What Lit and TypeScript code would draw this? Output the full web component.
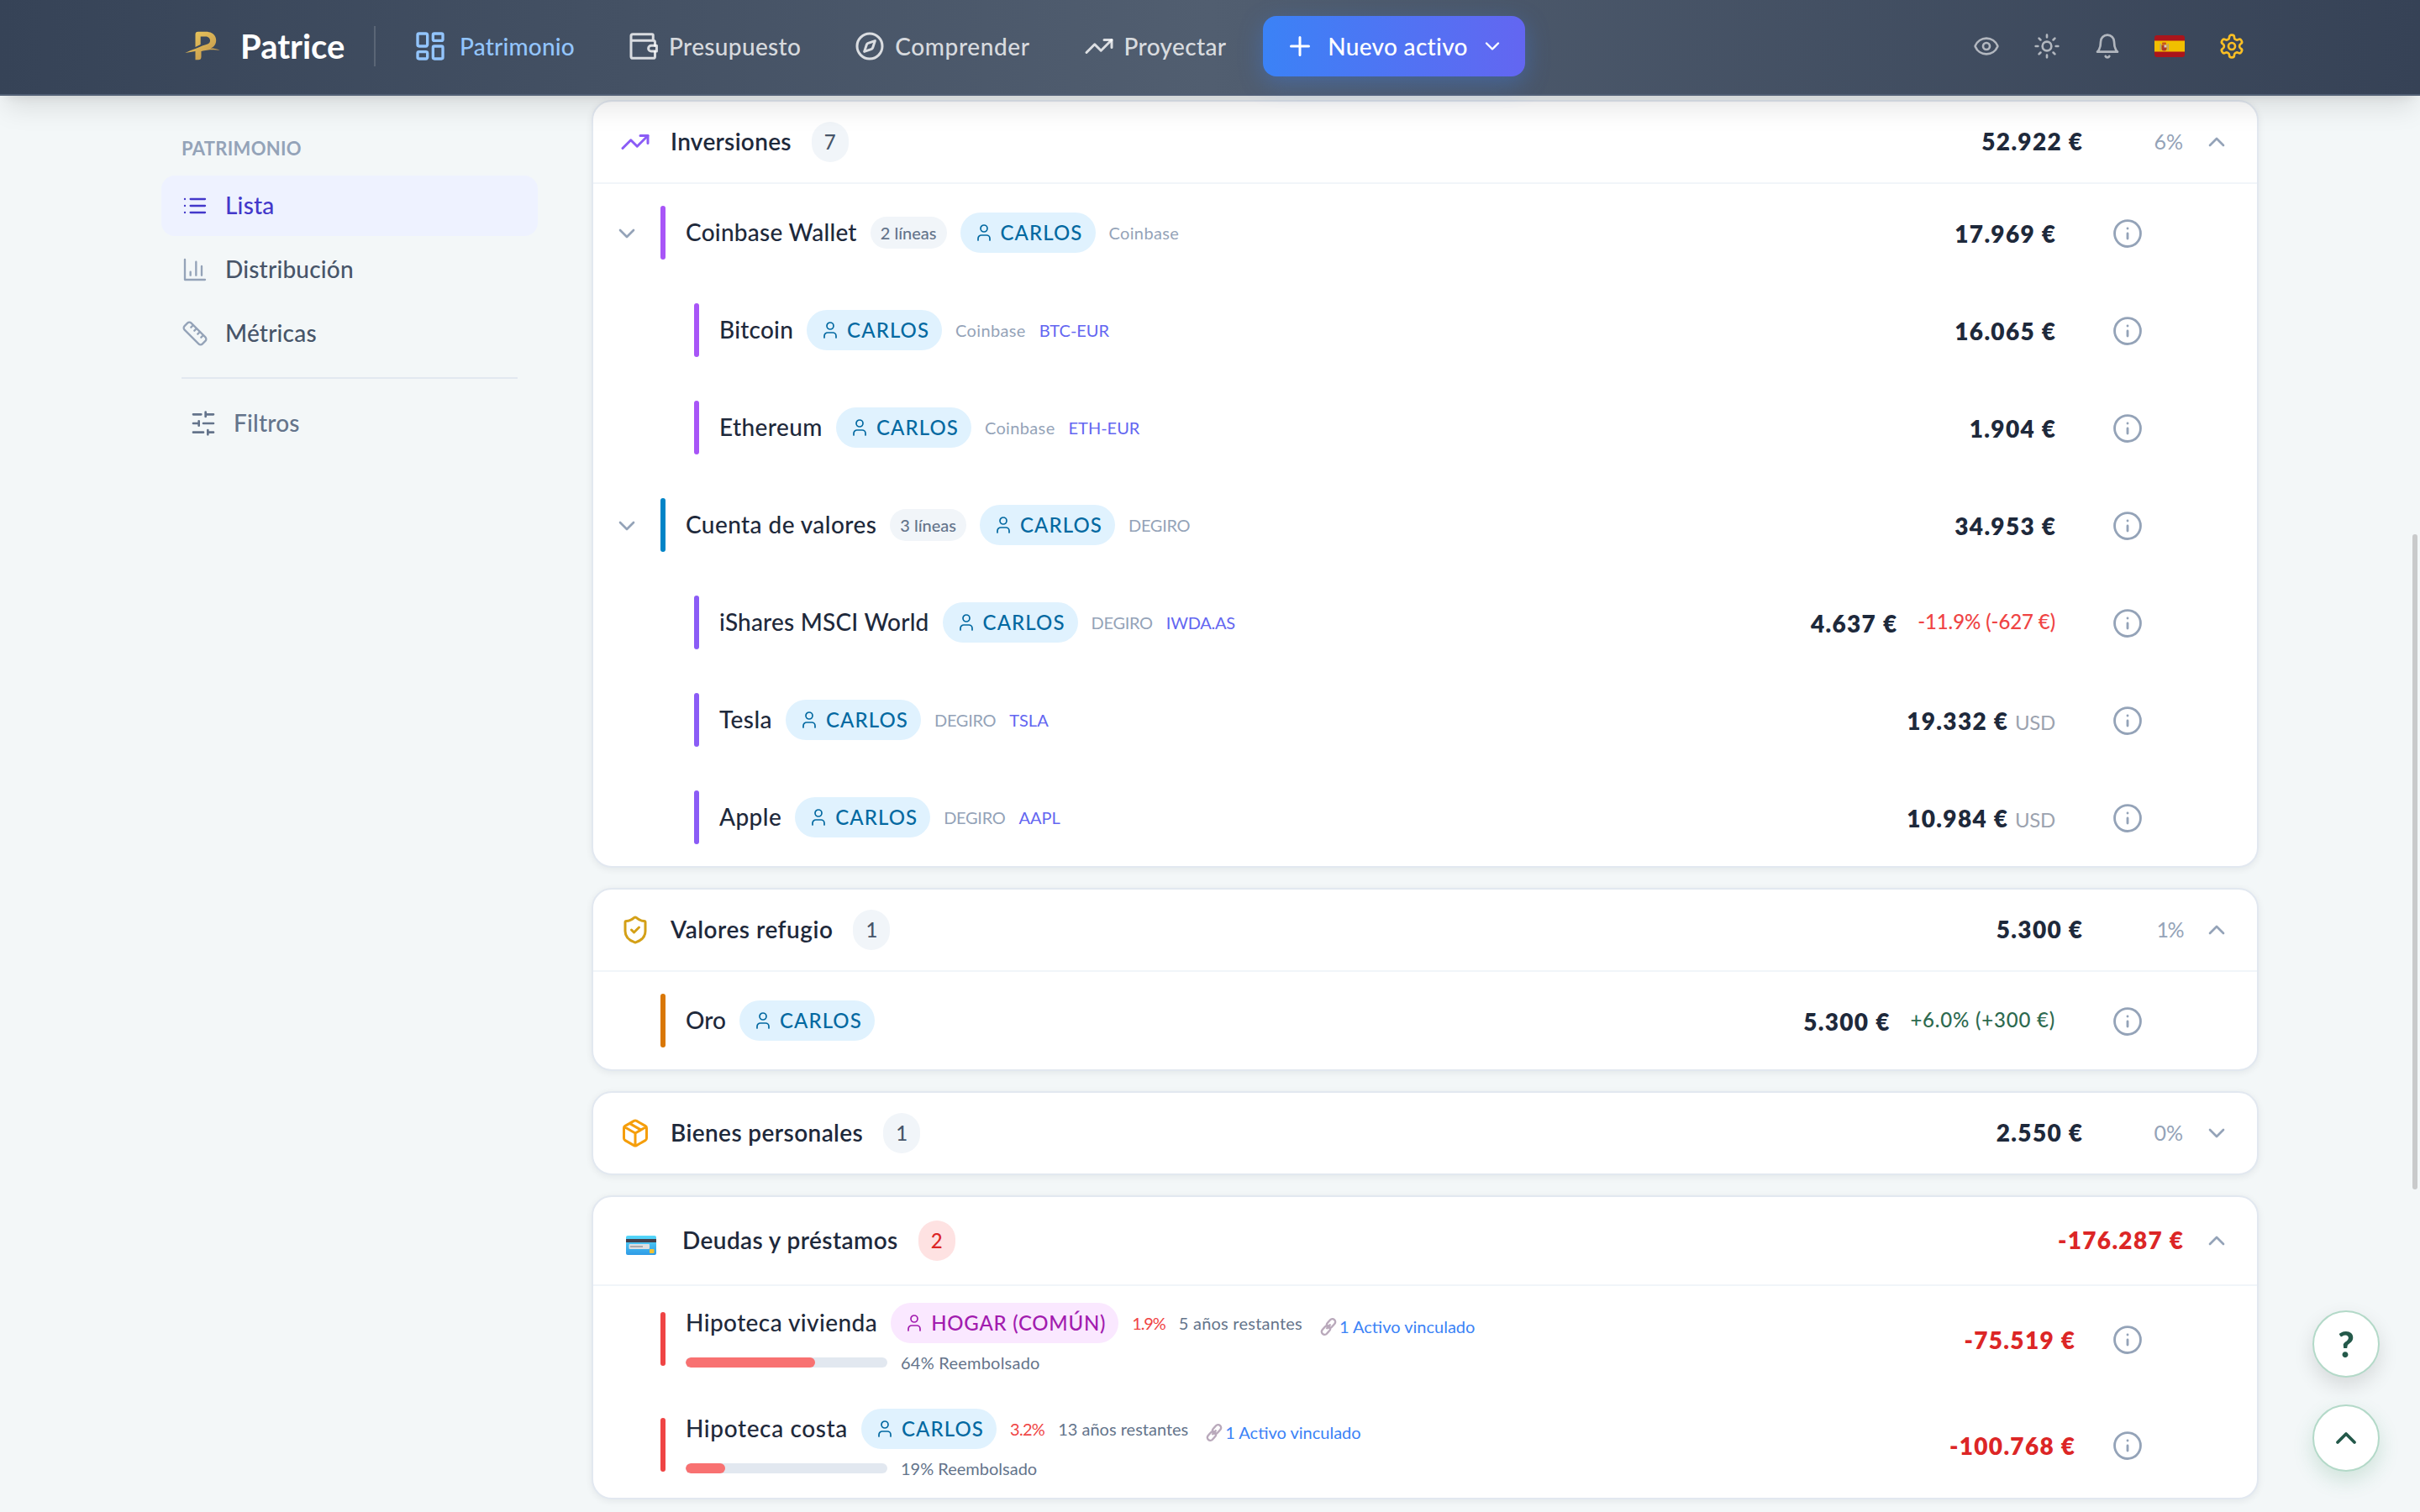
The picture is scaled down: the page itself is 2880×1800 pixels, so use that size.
import { LitElement, css, html, nothing, svg, SVGTemplateResult } from "lit";
import { customElement, property } from "lit/decorators.js";
import { classMap } from "lit/directives/class-map.js";
import { styleMap } from "lit/directives/style-map.js";

const ICONS: Record<string, SVGTemplateResult> = {
  dashboard: svg`<rect x="3" y="3" width="7" height="9" rx="1"/><rect x="14" y="3" width="7" height="5" rx="1"/><rect x="14" y="12" width="7" height="9" rx="1"/><rect x="3" y="16" width="7" height="5" rx="1"/>`,
  wallet: svg`<path d="M19.5 7.5V3.4a.9.9 0 0 0-.9-.9H3.4a1.4 1.4 0 0 0-1.4 1.4v16.2a1.4 1.4 0 0 0 1.4 1.4h16.2a1.4 1.4 0 0 0 1.4-1.4v-4M2 6.2a1.4 1.4 0 0 0 1.4 1.3h16.2A1.4 1.4 0 0 1 21 8.900v2.600"/><path d="M22.300 11.500v4.500h-4.300a2.250 2.250 0 0 1 0-4.500z"/>`,
  compass: svg`<circle cx="12" cy="12" r="10"/><path d="m16.240 7.760-1.800 5.410a2 2 0 0 1-1.270 1.270L7.760 16.240l1.800-5.410a2 2 0 0 1 1.270-1.270z"/>`,
  trending: svg`<path d="m22 7-8.500 8.500-5-5L2 17"/><path d="M16 7h6v6"/>`,
  plus: svg`<path d="M5 12h14M12 5v14"/>`,
  down: svg`<path d="m6 9 6 6 6-6"/>`,
  up: svg`<path d="m18 15-6-6-6 6"/>`,
  eye: svg`<path d="M2.062 12.348a1 1 0 0 1 0-.696 10.750 10.750 0 0 1 19.876 0 1 1 0 0 1 0 .696 10.750 10.750 0 0 1-19.876 0"/><circle cx="12" cy="12" r="3"/>`,
  sun: svg`<circle cx="12" cy="12" r="4"/><path d="M12 2v2M12 20v2M4.930 4.930l1.410 1.410M17.660 17.660l1.410 1.410M2 12h2M20 12h2M6.340 17.660l-1.410 1.410M19.070 4.930l-1.410 1.410"/>`,
  bell: svg`<path d="M6 8a6 6 0 0 1 12 0c0 7 3 9 3 9H3s3-2 3-9"/><path d="M10.300 21a1.940 1.940 0 0 0 3.400 0"/>`,
  gear: svg`<path d="M12.220 2h-.44a2 2 0 0 0-2 2v.18a2 2 0 0 1-1 1.730l-.43.25a2 2 0 0 1-2 0l-.15-.08a2 2 0 0 0-2.730.73l-.22.38a2 2 0 0 0 .73 2.730l.15.1a2 2 0 0 1 1 1.720v.51a2 2 0 0 1-1 1.740l-.15.09a2 2 0 0 0-.73 2.730l.22.38a2 2 0 0 0 2.730.73l.15-.08a2 2 0 0 1 2 0l.43.25a2 2 0 0 1 1 1.730V20a2 2 0 0 0 2 2h.44a2 2 0 0 0 2-2v-.18a2 2 0 0 1 1-1.730l.43-.25a2 2 0 0 1 2 0l.15.08a2 2 0 0 0 2.730-.73l.22-.39a2 2 0 0 0-.73-2.730l-.15-.08a2 2 0 0 1-1-1.740v-.5a2 2 0 0 1 1-1.740l.15-.09a2 2 0 0 0 .73-2.730l-.22-.38a2 2 0 0 0-2.730-.73l-.15.08a2 2 0 0 1-2 0l-.43-.25a2 2 0 0 1-1-1.730V4a2 2 0 0 0-2-2z"/><circle cx="12" cy="12" r="3"/>`,
  list: svg`<path d="M8 6h13M8 12h13M8 18h13M3 6h.01M3 12h.01M3 18h.01"/>`,
  chart: svg`<path d="M3 3v18h18M18 17V9M13 17V5M8 17v-3"/>`,
  ruler: svg`<path d="M21.300 15.300a2.400 2.400 0 0 1 0 3.400l-2.600 2.600a2.400 2.400 0 0 1-3.400 0L2.700 8.700a2.410 2.410 0 0 1 0-3.400l2.600-2.600a2.410 2.410 0 0 1 3.400 0ZM14.500 12.500l2-2M11.500 9.500l2-2M8.500 6.500l2-2M17.500 15.500l2-2"/>`,
  sliders: svg`<path d="M21 4h-7M10 4H3M21 12h-9M8 12H3M21 20h-5M12 20H3M14 2v4M8 10v4M16 18v4"/>`,
  user: svg`<path d="M19 21v-2a4 4 0 0 0-4-4H9a4 4 0 0 0-4 4v2"/><circle cx="12" cy="7" r="4"/>`,
  info: svg`<circle cx="12" cy="12" r="10.300"/><path d="M12 16v-4M12 8h.01"/>`,
  shield: svg`<path d="M20 13c0 5-3.500 7.500-7.660 8.950a1 1 0 0 1-.67-.01C7.500 20.500 4 18 4 13V6a1 1 0 0 1 1-1c2 0 4.500-1.200 6.240-2.720a1.170 1.170 0 0 1 1.520 0C14.510 3.810 17 5 19 5a1 1 0 0 1 1 1z"/><path d="m9 12 2 2 4-4"/>`,
  box: svg`<path d="M11 21.730a2 2 0 0 0 2 0l7-4A2 2 0 0 0 21 16V8a2 2 0 0 0-1-1.730l-7-4a2 2 0 0 0-2 0l-7 4A2 2 0 0 0 3 8v8a2 2 0 0 0 1 1.730zM12 22V12M3.300 7 12 12l8.700-5M7.500 4.270l9 5.150"/>`,
};

// Letter spacing in px, for labels that need other than their class gives
const TRACKING: Record<string, number> = {
  "Patrimonio": 0.2,
  "Comprender": 0.6,
  "Coinbase Wallet": 0.25,
  "Bitcoin": 0.25,
  "iShares MSCI World": 0.2,
  "Oro": 0,
  "Hipoteca costa": 0.63,
  "Inversiones": 0.3,
  "Valores refugio": 0.52,
  "HOGAR (COMÚN)": 0.75,
  "Coinbase": 0.35,
  "DEGIRO": -0.3,
  "IWDA.AS": -0.25,
  "1.9%": -1.1,
  "3.2%": -0.7,
  "13 años restantes": 0,
  "19% Reembolsado": 0,
  "+6.0% (+300 €)": 0.8,
  "-11.9% (-627 €)": -0.1,
  "1%": -1.5,
};

const label = (value: string, classes: string) => html`<span
  class=${classes}
  style=${styleMap(value in TRACKING ? { letterSpacing: `${TRACKING[value]}px` } : {})}
>${value}</span>`;

@customElement("ui-icon")
export class UiIcon extends LitElement {
  static styles = css`
    :host {
      display: inline-flex;
      flex: none;
    }
    .icon {
      display: block;
      fill: none;
      stroke: currentColor;
      stroke-linecap: round;
      stroke-linejoin: round;
      overflow: visible;
    }
  `;

  @property({ type: String })
  name = "";

  @property({ type: Number })
  size = 32;

  @property({ type: Number })
  weight = 2;

  render() {
    return html`<svg class="icon" viewBox="0 0 24 24" width=${this.size} height=${this.size} stroke-width=${this.weight}>
      ${ICONS[this.name] ?? nothing}
    </svg>`;
  }
}

interface Holding {
  name: string;
  color: string;
  amount: string;
  owner: string;
  shared?: boolean;
  lines?: string;
  child?: boolean;
  source?: string;
  ticker?: string;
  gain?: string;
  loss?: string;
  currency?: string;
}

interface Debt extends Holding {
  rate: string;
  remaining: string;
  paid: number;
  paidWidth: number;
}

interface Group {
  title: string;
  icon: string;
  iconColor: string;
  total: string;
  share: string;
  count: number;
  open: boolean;
  holdings: Holding[];
}

const GROUPS: Group[] = [
  {
    title: "Inversiones",
    icon: "trending",
    iconColor: "#8b5cf6",
    total: "52.922 €",
    share: "6%",
    count: 7,
    open: true,
    holdings: [
      { name: "Coinbase Wallet", color: "#a855f7", amount: "17.969 €", owner: "CARLOS", lines: "2 líneas", source: "Coinbase" },
      { name: "Bitcoin", color: "#a855f7", amount: "16.065 €", owner: "CARLOS", child: true, source: "Coinbase", ticker: "BTC-EUR" },
      { name: "Ethereum", color: "#a855f7", amount: "1.904 €", owner: "CARLOS", child: true, source: "Coinbase", ticker: "ETH-EUR" },
      { name: "Cuenta de valores", color: "#0284c7", amount: "34.953 €", owner: "CARLOS", lines: "3 líneas", source: "DEGIRO" },
      { name: "iShares MSCI World", color: "#8b5cf6", amount: "4.637 €", owner: "CARLOS", child: true, source: "DEGIRO", ticker: "IWDA.AS", loss: "-11.9% (-627 €)" },
      { name: "Tesla", color: "#8b5cf6", amount: "19.332 €", owner: "CARLOS", child: true, source: "DEGIRO", ticker: "TSLA", currency: "USD" },
      { name: "Apple", color: "#8b5cf6", amount: "10.984 €", owner: "CARLOS", child: true, source: "DEGIRO", ticker: "AAPL", currency: "USD" },
    ],
  },
  {
    title: "Valores refugio",
    icon: "shield",
    iconColor: "#d4a017",
    total: "5.300 €",
    share: "1%",
    count: 1,
    open: true,
    holdings: [{ name: "Oro", color: "#d97706", amount: "5.300 €", owner: "CARLOS", gain: "+6.0% (+300 €)" }],
  },
  {
    title: "Bienes personales",
    icon: "box",
    iconColor: "#f59e0b",
    total: "2.550 €",
    share: "0%",
    count: 1,
    open: false,
    holdings: [],
  },
];

const DEBTS: Debt[] = [
  { name: "Hipoteca vivienda", color: "#ef4444", amount: "-75.519 €", owner: "HOGAR (COMÚN)", shared: true, rate: "1.9%", remaining: "5 años restantes", paid: 64, paidWidth: 64.2 },
  { name: "Hipoteca costa", color: "#ef4444", amount: "-100.768 €", owner: "CARLOS", rate: "3.2%", remaining: "13 años restantes", paid: 19, paidWidth: 19.5 },
];

@customElement("app-root")
export class AppRoot extends LitElement {
  static styles = css`
    :host {
      display: block;
      height: 1800px;
      overflow: hidden;
      background: #f3f7f8;
      color: #1e293b;
      font-family: Lato, "Liberation Sans", sans-serif;
      font-size: 28px;
      font-weight: 500;
      line-height: 1;
      white-space: nowrap;
    }
    * {
      box-sizing: border-box;
    }

    /* Top bar */
    .topbar {
      position: relative;
      z-index: 1;
      display: flex;
      align-items: center;
      height: 114px;
      padding: 0 208px 2px 216px;
      border-bottom: 2px solid #526075;
      background: linear-gradient(90deg, #364357, #515e70 50%, #364256);
      box-shadow: 0 20px 30px -6px rgba(0, 0, 0, 0.1), 0 8px 12px -8px rgba(0, 0, 0, 0.1);
      color: rgba(255, 255, 255, 0.8);
    }
    .brand {
      display: flex;
      align-items: center;
      width: 229px;
      padding-left: 4px;
      gap: 24px;
      color: #fff;
      font-size: 40px;
      font-weight: 700;
    }
    .separator {
      width: 2px;
      height: 48px;
      background: rgba(255, 255, 255, 0.15);
    }
    .nav {
      display: flex;
      align-items: center;
      gap: 64px;
      padding-left: 45px;
    }
    .nav-item {
      display: flex;
      align-items: center;
      gap: 12px;
      letter-spacing: 0.35px;
    }
    .nav-item.active {
      gap: 15px;
      color: #93c5fd;
    }
    .new-asset {
      display: flex;
      align-items: center;
      width: 312px;
      height: 72px;
      margin-left: 44px;
      padding-left: 26px;
      border-radius: 16px;
      background: linear-gradient(90deg, #3b82f6, #6366f1);
      box-shadow: 0 8px 28px rgba(59, 130, 246, 0.35);
      color: #fff;
    }
    .new-asset .label {
      width: 166px;
      margin: 0 16px 0 15px;
      letter-spacing: 0.3px;
    }
    .tools {
      display: flex;
      align-items: center;
      gap: 40px;
      margin-left: auto;
      color: rgba(255, 255, 255, 0.6);
    }
    .flag {
      display: block;
    }
    .tools .gear {
      color: #fbbf24;
    }

    /* Page */
    .page {
      display: grid;
      grid-template-columns: 448px 1984px;
      column-gap: 64px;
      padding: 5px 0 0 192px;
    }
    .sidebar {
      padding-top: 47px;
    }
    .sidebar-title {
      height: 43px;
      padding-left: 24px;
      color: #94a3b8;
      font-size: 22px;
      font-weight: 700;
      letter-spacing: 0.3px;
    }
    .side-item {
      display: flex;
      align-items: center;
      gap: 20px;
      height: 72px;
      margin-bottom: 4px;
      padding-left: 24px;
      border-radius: 16px;
      color: #475569;
      letter-spacing: 0.2px;
    }
    .side-label {
      padding-bottom: 2px;
    }
    .side-item ui-icon {
      color: #94a3b8;
    }
    .side-item.active,
    .side-item.active ui-icon {
      background: #eef2ff;
      color: #4338ca;
    }
    .rule {
      height: 2px;
      margin: 16px 24px 17px;
      background: #e2e8f0;
    }
    .side-item.filters {
      padding-left: 34px;
    }
    .side-item.filters,
    .side-item.filters ui-icon {
      color: #64748b;
    }

    /* Cards */
    .cards {
      display: flex;
      flex-direction: column;
      gap: 24px;
    }
    .card {
      border: 2px solid #e2e8f0;
      border-radius: 24px;
      background: #fff;
      box-shadow: 0 2px 8px rgba(15, 23, 42, 0.07);
    }
    .card-head {
      display: flex;
      align-items: center;
      height: 96px;
      padding: 0 32px;
    }
    .card-head.tall {
      height: 104px;
      padding-left: 39px;
    }
    .card-title {
      margin-left: 24px;
      padding-bottom: 2px;
      font-weight: 600;
      letter-spacing: 0.4px;
    }
    .tall .card-title {
      margin-left: 31px;
    }
    .count {
      height: 48px;
      margin-left: 24px;
      padding: 0 15px;
      border-radius: 24px;
      background: #f1f5f9;
      color: #475569;
      font-size: 24px;
      line-height: 48px;
    }
    .count.red {
      background: #fee2e2;
      color: #dc2626;
    }
    .amount {
      margin-right: -1.3px;
      font-weight: 800;
      font-variant-numeric: tabular-nums;
      letter-spacing: 1.3px;
    }
    .amount.red {
      color: #dc2626;
    }
    .card-head .amount {
      margin-left: auto;
      padding-bottom: 2px;
    }
    .share {
      width: 120px;
      padding-bottom: 1px;
      color: #94a3b8;
      font-size: 25px;
      font-weight: 400;
      text-align: right;
    }
    .toggle {
      margin-left: 24px;
      color: #94a3b8;
    }
    .rows {
      border-top: 2px solid #f1f5f9;
    }
    .row {
      display: flex;
      align-items: center;
      height: 116px;
      padding: 0 136px 0 24px;
    }
    .row.debt {
      height: 126px;
    }
    .expander {
      display: flex;
      width: 56px;
      padding: 2px 24px 0 0;
      justify-content: center;
      color: #94a3b8;
    }
    .child .expander {
      width: 96px;
    }
    .stripe {
      width: 6px;
      height: 64px;
      margin-right: 24px;
      border-radius: 3px;
    }
    .line {
      display: flex;
      align-items: center;
      gap: 16px;
      height: 48px;
    }
    .name {
      padding-bottom: 2px;
      letter-spacing: 0.42px;
    }
    .pill {
      display: flex;
      align-items: center;
      gap: 8px;
      height: 48px;
      padding: 0 16px;
      border-radius: 24px;
      background: #e0f2fe;
      color: #0369a1;
      font-size: 24px;
    }
    .owner {
      letter-spacing: 1.1px;
      margin-right: -1px;
    }
    .pill.shared {
      background: #fae8ff;
      color: #a21caf;
    }
    .lines {
      height: 38px;
      padding: 0 12px;
      border-radius: 19px;
      background: #f1f5f9;
      color: #64748b;
      font-size: 20px;
      line-height: 38px;
    }
    .meta {
      color: #94a3b8;
      font-size: 20px;
      font-weight: 400;
    }
    .ticker {
      color: #6366f1;
    }
    .rate {
      color: #ef4444;
    }
    .slate {
      color: #64748b;
      letter-spacing: 0.23px;
    }
    .linked {
      display: flex;
      align-items: center;
      gap: 1px;
      margin: 8px 0 0 4px;
      color: #3b82f6;
    }
    .progress {
      display: flex;
      align-items: center;
      gap: 16px;
      height: 30px;
      margin-top: 8px;
    }
    .track {
      width: 240px;
      height: 12px;
      overflow: hidden;
      border-radius: 6px;
      background: #e2e8f0;
    }
    .fill {
      height: 12px;
      border-radius: 6px;
      background: #f87171;
    }
    .values {
      display: flex;
      align-items: baseline;
      margin-left: auto;
      padding: 2px 68px 0 0;
    }
    .debt .values {
      padding-right: 45px;
    }
    .change {
      align-self: flex-start;
      margin-left: 25px;
      font-size: 24px;
      color: #2d6a4f;
    }
    .change.loss {
      color: #ef4444;
    }
    .currency {
      margin-left: 9px;
      color: #9ca3af;
      font-size: 24px;
      font-weight: 400;
      letter-spacing: -0.3px;
    }
    .info {
      padding-top: 2px;
      color: #94a3b8;
    }

    /* Floating controls */
    .fabs {
      position: fixed;
      right: 48px;
      bottom: 48px;
      display: flex;
      flex-direction: column;
      gap: 32px;
    }
    .fab {
      display: flex;
      align-items: center;
      justify-content: center;
      width: 80px;
      height: 80px;
      border: 2px solid #b3d9c8;
      border-radius: 50%;
      background: #fff;
      box-shadow: 0 10px 24px rgba(0, 0, 0, 0.12);
      color: #24594a;
      font-family: inherit;
      font-size: 42px;
      font-weight: 900;
    }
    .fab.green {
      box-shadow: 0 10px 24px rgba(45, 140, 90, 0.18);
    }
    .scrollbar {
      position: fixed;
      top: 636px;
      right: 3px;
      width: 6px;
      height: 780px;
      border-radius: 3px;
      background: #c9cacb;
    }
  `;

  renderLogo() {
    return svg`<svg width="42" height="36" viewBox="0 0 42 36">
      <defs>
        <linearGradient id="gold" x1="0" y1="0" x2="1" y2="1">
          <stop offset="0" stop-color="#edcb5e" />
          <stop offset="1" stop-color="#c0924a" />
        </linearGradient>
      </defs>
      <path fill="url(#gold)" d="M12.500 4q0-3.300 3.300-3.300H25c7.500 0 12.200 4.300 12.200 10.300 0 4.700-2.600 8-6.700 9.600 4.300-.1 8 .5 11 2.100-6-.5-14-1-22 1.400v6.700q0 3.500-3.500 3.500h-3.500v-10.200C8.500 24.800 4.500 25.300.3 26c4-2 8.200-3.600 12.200-5l6-2.600c4-1.500 7.500-2 9.500-3.300 3.500-2.300 2.500-8.600-3.300-8.600h-6v9.500l-6.200 3z"/>
    </svg>`;
  }

  renderFlag() {
    return svg`<svg class="flag" width="36" height="26" viewBox="0 0 36 26">
      <rect width="36" height="26" rx="3" fill="#aa151b" />
      <rect y="6.500" width="36" height="13" fill="#f1bf00" />
      <rect x="6.500" y="10" width="1.300" height="8" fill="#a9a08c" />
      <rect x="15.500" y="10" width="1.300" height="8" fill="#a9a08c" />
      <rect x="9" y="8.500" width="5" height="2.500" rx="1" fill="#c8541f" />
      <path d="M8.500 11.500h6v4.500q0 2.500-3 2.500t-3-2.500z" fill="#ad3a2a" />
      <rect x="11.500" y="11.500" width="3" height="3" fill="#d9c9c4" />
    </svg>`;
  }

  renderCreditCard() {
    return svg`<svg width="36" height="36" viewBox="0 0 36 36">
      <defs>
        <linearGradient id="sky" x1="0" y1="0" x2="0" y2="1">
          <stop offset="0" stop-color="#55d8fa" />
          <stop offset="1" stop-color="#2f9be6" />
        </linearGradient>
      </defs>
      <rect y="12" width="36" height="23" rx="2" fill="url(#sky)" />
      <rect y="16" width="36" height="4" fill="#433f4c" />
      <rect x="3.500" y="22" width="24.500" height="6" rx="1" fill="#dcdfe2" />
      <rect x="5" y="24" width="15" height="2" fill="#a8a9ad" />
      <rect x="28" y="28" width="5.500" height="5" rx="1" fill="#f3c233" />
    </svg>`;
  }

  renderLink() {
    return svg`<svg width="23" height="23" viewBox="0 0 23 23" fill="none" stroke="#b9a9bb" stroke-width="2.400">
      <rect x="10.500" y="1.500" width="7" height="12" rx="3.500" transform="rotate(42 14 7.500)" />
      <rect x="4.500" y="9.500" width="7" height="12" rx="3.500" transform="rotate(42 8 15.500)" />
      <path d="m8.500 14 5-5.500" />
    </svg>`;
  }

  renderOwner(item: Holding) {
    return html`<span class=${classMap({ pill: true, shared: !!item.shared })}>
      <ui-icon name="user" size="24" weight="1.700"></ui-icon>${label(item.owner, "owner")}
    </span>`;
  }

  renderHolding(item: Holding) {
    return html`
      <div class=${classMap({ row: true, child: !!item.child })}>
        <span class="expander">${item.lines ? html`<ui-icon name="down" size="32"></ui-icon>` : nothing}</span>
        <span class="stripe" style=${styleMap({ background: item.color })}></span>
        <div class="line">
          ${label(item.name, "name")}
          ${item.lines ? label(item.lines, "lines") : nothing}
          ${this.renderOwner(item)}
          ${item.source ? label(item.source, "meta") : nothing}
          ${item.ticker ? label(item.ticker, "meta ticker") : nothing}
        </div>
        <div class="values">
          <span class="amount">${item.amount}</span>
          ${item.gain ? label(item.gain, "change") : nothing}
          ${item.loss ? label(item.loss, "change loss") : nothing}
          ${item.currency ? label(item.currency, "currency") : nothing}
        </div>
        <ui-icon class="info" name="info" size="36" weight="1.900"></ui-icon>
      </div>
    `;
  }

  renderDebt(item: Debt) {
    return html`
      <div class="row debt">
        <span class="expander"></span>
        <span class="stripe" style=${styleMap({ background: item.color })}></span>
        <div>
          <div class="line">
            ${label(item.name, "name")}
            ${this.renderOwner(item)}
            ${label(item.rate, "meta rate")}
            ${label(item.remaining, "meta slate")}
            <span class="meta linked">${this.renderLink()}1 Activo vinculado</span>
          </div>
          <div class="progress">
            <div class="track"><div class="fill" style=${styleMap({ width: `${item.paidWidth}%` })}></div></div>
            ${label(`${item.paid}% Reembolsado`, "meta slate")}
          </div>
        </div>
        <div class="values"><span class="amount red">${item.amount}</span></div>
        <ui-icon class="info" name="info" size="36" weight="1.900"></ui-icon>
      </div>
    `;
  }

  renderGroup(group: Group) {
    return html`
      <section class="card">
        <div class="card-head">
          <ui-icon name=${group.icon} size="36" style=${styleMap({ color: group.iconColor })}></ui-icon>
          ${label(group.title, "card-title")}
          <span class="count">${group.count}</span>
          <span class="amount">${group.total}</span>
          ${label(group.share, "share")}
          <ui-icon class="toggle" name=${group.open ? "up" : "down"}></ui-icon>
        </div>
        ${group.open ? html`<div class="rows">${group.holdings.map((item) => this.renderHolding(item))}</div>` : nothing}
      </section>
    `;
  }

  render() {
    return html`
      <header class="topbar">
        <div class="brand">${this.renderLogo()}<span class="brand-name">Patrice</span></div>
        <div class="separator"></div>
        <nav class="nav">
          <a class="nav-item active"><ui-icon name="dashboard" size="40"></ui-icon>${label("Patrimonio", "nav-label")}</a>
          <a class="nav-item"><ui-icon name="wallet" size="36"></ui-icon>${label("Presupuesto", "nav-label")}</a>
          <a class="nav-item"><ui-icon name="compass" size="36"></ui-icon>${label("Comprender", "nav-label")}</a>
          <a class="nav-item"><ui-icon name="trending" size="36"></ui-icon>${label("Proyectar", "nav-label")}</a>
        </nav>
        <div class="new-asset">
          <ui-icon name="plus" size="36"></ui-icon>
          <span class="label">Nuevo activo</span>
          <ui-icon name="down" size="28"></ui-icon>
        </div>
        <div class="tools">
          <ui-icon name="eye"></ui-icon>
          <ui-icon name="sun"></ui-icon>
          <ui-icon name="bell"></ui-icon>
          ${this.renderFlag()}
          <ui-icon class="gear" name="gear"></ui-icon>
        </div>
      </header>
      <div class="page">
        <aside class="sidebar">
          <div class="sidebar-title">PATRIMONIO</div>
          <a class="side-item active"><ui-icon name="list" weight="1.750"></ui-icon><span class="side-label">Lista</span></a>
          <a class="side-item"><ui-icon name="chart" weight="1.750"></ui-icon><span class="side-label">Distribución</span></a>
          <a class="side-item"><ui-icon name="ruler" weight="1.750"></ui-icon><span class="side-label">Métricas</span></a>
          <div class="rule"></div>
          <a class="side-item filters"><ui-icon name="sliders"></ui-icon><span class="side-label">Filtros</span></a>
        </aside>
        <main class="cards">
          ${GROUPS.map((group) => this.renderGroup(group))}
          <section class="card">
            <div class="card-head tall">
              ${this.renderCreditCard()}
              <span class="card-title">Deudas y préstamos</span>
              <span class="count red">2</span>
              <span class="amount red">-176.287 €</span>
              <ui-icon class="toggle" name="up"></ui-icon>
            </div>
            <div class="rows">${DEBTS.map((item) => this.renderDebt(item))}</div>
          </section>
        </main>
      </div>
      <div class="fabs">
        <button class="fab">?</button>
        <button class="fab green"><ui-icon name="up" size="40" weight="2.300"></ui-icon></button>
      </div>
      <div class="scrollbar"></div>
    `;
  }
}
